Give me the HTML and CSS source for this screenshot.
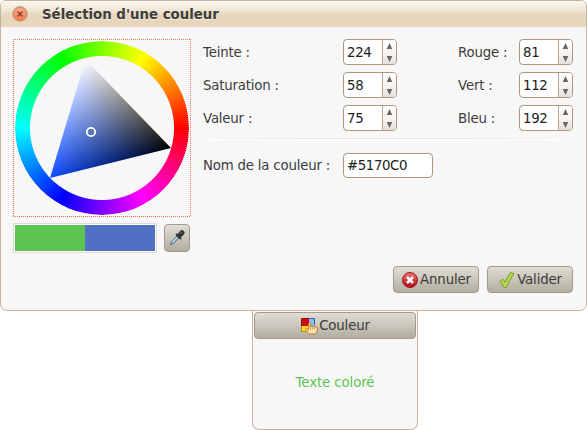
FILE: index.html
```html
<!DOCTYPE html>
<html lang="fr">
<head>
<meta charset="utf-8">
<title>Sélection d'une couleur</title>
<link rel="stylesheet" href="styles.css">
</head>
<body>
<main class="dialog">
  <header class="titlebar">
    <svg class="close" width="18" height="18" viewBox="0 0 18 18"><defs><linearGradient id="cl" x2="0" y2="1"><stop stop-color="#f9a98a"/><stop offset="1" stop-color="#fa7847"/></linearGradient></defs><circle cx="9" cy="9" r="8.2" fill="#cfc3b0"/><circle cx="9" cy="9" r="6.7" fill="url(#cl)" stroke="#ce7959" stroke-width=".8"/><path d="M6.500 6.500l5 5m0-5l-5 5" stroke="#75442f" stroke-width="1.400"/></svg>
    <h1>Sélection d'une couleur</h1>
  </header>
  <div class="content">
    <section class="picker">
      <div class="wheel">
        <div class="ring"></div>
        <svg class="triangle" width="178" height="178" viewBox="13 39 178 178">
          <defs>
            <linearGradient id="hue" gradientUnits="userSpaceOnUse" x1="127.6" y1="103.1" x2="50" y2="178"><stop stop-color="#000"/><stop offset="1" stop-color="#0f4dff"/></linearGradient>
            <linearGradient id="white" gradientUnits="userSpaceOnUse" x1="111.5" y1="162.8" x2="86" y2="60"><stop stop-color="#000"/><stop offset="1" stop-color="#fff"/></linearGradient>
            <clipPath id="tri"><path d="M50 178L85.500 59.500 171 148z"/></clipPath>
          </defs>
          <g clip-path="url(#tri)">
            <g class="mix">
              <rect x="45" y="55" width="130" height="130" fill="url(#hue)"/>
              <rect class="add" x="45" y="55" width="130" height="130" fill="url(#white)"/>
            </g>
          </g>
          <path d="M39 188L50 178" stroke="#fff" stroke-width="1.700"/>
          <circle cx="91" cy="132" r="4.200" fill="none" stroke="#fff" stroke-width="1.800"/>
        </svg>
      </div>
      <div class="samples">
        <div class="swatches"><i class="old"></i><i class="new"></i></div>
        <button class="btn pipette"><svg width="18" height="18" viewBox="0 0 18 18"><path d="M2.500 15.500l1-3 5.500-5.500 2 2-5.500 5.500z" fill="#8fbbe0" stroke="#59646b" stroke-width=".9"/><path d="M4.300 13.200l4-4" stroke="#d8ebfa"/><path d="M8 5l5 5" stroke="#33362f" stroke-width="1.800"/><path d="M9.500 6l2.500-3.500c1-1.200 3-1.200 3.800-.2s.4 2.400-.6 3.400L12.500 8.500z" fill="#343834" stroke="#2c302c" stroke-width=".8"/><path d="M12.300 4.500l1.500-1.300" stroke="#899089"/></svg></button>
      </div>
    </section>
    <section class="values">
      <div class="grid">
        <label>Teinte :</label><div class="spin"><span>224</span><b><svg width="7" height="24" viewBox="0 0 7 24"><path d="M3.500 3L6.300 9H.7zM.7 16h5.600L3.500 22z"/></svg></b></div>
        <label>Rouge :</label><div class="spin"><span>81</span><b><svg width="7" height="24" viewBox="0 0 7 24"><path d="M3.500 3L6.300 9H.7zM.7 16h5.600L3.500 22z"/></svg></b></div>
        <label>Saturation :</label><div class="spin"><span>58</span><b><svg width="7" height="24" viewBox="0 0 7 24"><path d="M3.500 3L6.300 9H.7zM.7 16h5.600L3.500 22z"/></svg></b></div>
        <label>Vert :</label><div class="spin"><span>112</span><b><svg width="7" height="24" viewBox="0 0 7 24"><path d="M3.500 3L6.300 9H.7zM.7 16h5.600L3.500 22z"/></svg></b></div>
        <label>Valeur :</label><div class="spin"><span>75</span><b><svg width="7" height="24" viewBox="0 0 7 24"><path d="M3.500 3L6.300 9H.7zM.7 16h5.600L3.500 22z"/></svg></b></div>
        <label>Bleu :</label><div class="spin"><span>192</span><b><svg width="7" height="24" viewBox="0 0 7 24"><path d="M3.500 3L6.300 9H.7zM.7 16h5.600L3.500 22z"/></svg></b></div>
      </div>
      <div class="rule"></div>
      <div class="name"><label>Nom de la couleur :</label><div class="entry">#5170C0</div></div>
    </section>
  </div>
  <footer class="actions">
    <button class="btn"><svg width="18" height="18" viewBox="0 0 18 18"><defs><linearGradient id="rd" x2="0" y2="1"><stop stop-color="#e77b78"/><stop offset=".5" stop-color="#d43a3c"/><stop offset="1" stop-color="#ae0c22"/></linearGradient></defs><circle cx="9" cy="9" r="7.500" fill="url(#rd)" stroke="#a9141c"/><path d="M6 6l6 6m0-6l-6 6" stroke="#fff" stroke-width="2.600"/></svg><span>Annuler</span></button>
    <button class="btn"><svg width="18" height="18" viewBox="0 0 18 18"><path d="M1.700 10.300l3.300-2 2.300 3Q9.500 6 12.500 1.600l3.600 1Q11 9.500 8.300 16.500H6.300Q4.500 12.700 1.700 10.300z" fill="#b8dc50" stroke="#719d2b"/></svg><span>Valider</span></button>
  </footer>
</main>
<aside class="panel">
  <button class="btn color-btn"><svg width="18" height="18" viewBox="0 0 18 18"><path d="M2 2h7v7H2z" fill="#d00a12"/><path d="M9 2h6v7H9z" fill="#8dbcf0"/><path d="M2 9h7v6H2z" fill="#ffe02c"/><path d="M9 9h6v6H9z" fill="#77a9df"/><path d="M9 1.500H1.500V9" fill="none" stroke="#7d1518"/><path d="M1.500 9v5.500H7" fill="none" stroke="#b98b12"/><path d="M9 1.500h5.500V8" fill="none" stroke="#2c62a5"/><path d="M8.500 16.500L5.700 13c-.8-1.200.6-2 1.500-1.200l1.300 1.300V6.700c0-1.200 1.900-1.200 1.900 0v3c0-1.200 1.900-1.100 1.900 0 .2-.9 1.900-.8 1.900.3.300-.8 1.800-.6 1.800.4.400-.6 1.500-.3 1.500.7 0 2.600-.8 5.900-2.800 5.900H9.800z" fill="#ffe1ad" stroke="#bd7117" stroke-width=".9"/><path d="M10.400 9.500v3m1.900-3v3m1.900-2.500v2.500" stroke="#cd8936" stroke-width=".7"/></svg><span>Couleur</span></button>
  <p>Texte coloré</p>
</aside>
</body>
</html>
```
FILE: styles.css
```css
* { box-sizing: border-box; }
body {
  margin: 0;
  width: 587px;
  height: 430px;
  overflow: hidden;
  background: #fff;
  color: #3c3c3c;
  font: 13.33px/16px "DejaVu Sans", sans-serif;
}
h1, p { margin: 0; }
svg { display: block; flex: none; }
.dialog {
  height: 311px;
  border: 1px solid #c5b3a4;
  border-radius: 6px 6px 7px 7px;
  background: #f7f7f7;
  overflow: hidden;
}
.titlebar {
  height: 26px;
  padding-left: 10px;
  display: flex;
  align-items: center;
  gap: 13px;
  background: linear-gradient(#fcf9f2, #eee3ce 40%, #e6d7bc 50%, #e6d7bc);
}
.titlebar h1 { padding-top: 1px; font-size: 13.33px; line-height: 16px; text-shadow: 0 1px #f5eee1; }
.content { display: flex; height: 238px; padding: 12px 0 0 12px; }
.picker { width: 178px; }
.wheel {
  display: grid;
  width: 178px;
  height: 178px;
  background:
    repeating-linear-gradient(90deg, #ee775b 0 1px, transparent 1px 2px) top / 100% 1px no-repeat,
    repeating-linear-gradient(90deg, #ee775b 0 1px, transparent 1px 2px) bottom / 100% 1px no-repeat,
    repeating-linear-gradient(#ee775b 0 1px, transparent 1px 2px) left / 1px 100% no-repeat,
    repeating-linear-gradient(#ee775b 0 1px, transparent 1px 2px) right / 1px 100% no-repeat;
}
.ring, .triangle { grid-area: 1 / 1; }
.ring {
  width: 174px;
  height: 174px;
  margin: 2px;
  border-radius: 50%;
  background: conic-gradient(from 90deg, #f00, #f0f, #00f, #0ff, #0f0, #ff0, #f00);
  mask: radial-gradient(circle, transparent 71.5px, #000 72.5px);
}
.mix { isolation: isolate; }
.add { mix-blend-mode: plus-lighter; }
.samples { display: flex; margin-top: 6px; gap: 7px; }
.swatches {
  display: flex;
  width: 144px;
  height: 30px;
  border: 1px solid #e6dbd2;
  background: #fff;
  padding: 1px;
}
.swatches i { flex: 1; }
.old { background: #5bc453; }
.new { background: #5170c4; }
.btn {
  display: flex;
  align-items: center;
  justify-content: center;
  height: 27px;
  border: 1px solid #a19a8d;
  border-radius: 4px;
  padding: 0;
  background: linear-gradient(#e2ddd6, #cbc8bd 45%, #b1ad9f);
  color: #3c3c3c;
  font: inherit;
}
.pipette { width: 26px; height: 28px; margin-top: 1px; }
.values { width: 371px; padding-left: 12px; }
.values label { letter-spacing: -.2px; }
.grid {
  display: grid;
  grid-template-columns: 140px 115px 61px 54px;
  grid-auto-rows: 26px;
  row-gap: 7px;
  align-items: center;
}
.grid label { padding-top: 1px; }
.spin {
  display: flex;
  width: 54px;
  height: 26px;
  border: 1px solid #a99884;
  border-radius: 4px;
  background: #fff;
  overflow: hidden;
  color: #222;
  letter-spacing: -.35px;
}
.spin span { width: 39px; padding: 5px 0 0 3px; border-right: 1px solid #b9a895; }
.spin b {
  width: 13px;
  padding-left: 3px;
  background: linear-gradient(#fff, #f8f5f2 50%, #e7dfd6);
}
.spin svg { fill: #686868; }
.rule {
  height: 2px;
  margin: 7px 0 13px 4px;
  background: linear-gradient(90deg, #f7f7f7, #ece3d8 25%, #ece3d8 75%, #f7f7f7) top / 100% 1px no-repeat, #fff;
}
.name { display: flex; align-items: center; }
.name label { width: 140px; }
.entry {
  width: 90px;
  height: 25px;
  border: 1px solid #a99884;
  border-radius: 4px;
  background: #fff;
  padding: 4px 3px;
  color: #222;
  letter-spacing: -.4px;
}
.actions { display: flex; justify-content: flex-end; gap: 8px; padding: 1px 13px 0 0; }
.actions .btn { width: 86px; }
.panel {
  width: 166px;
  height: 120px;
  margin: -1px 0 0 252px;
  padding: 2px 1px 0;
  border: solid #c5b3a4;
  border-width: 0 1px 1px;
  border-radius: 0 0 7px 7px;
  background: #f7f7f7;
  position: relative;
  z-index: -1;
}
.btn span { letter-spacing: -.15px; padding-left: 1px; }
.color-btn { width: 162px; }
.panel p { margin-top: 36px; text-align: center; color: #5bc453; letter-spacing: -.1px; }
```
